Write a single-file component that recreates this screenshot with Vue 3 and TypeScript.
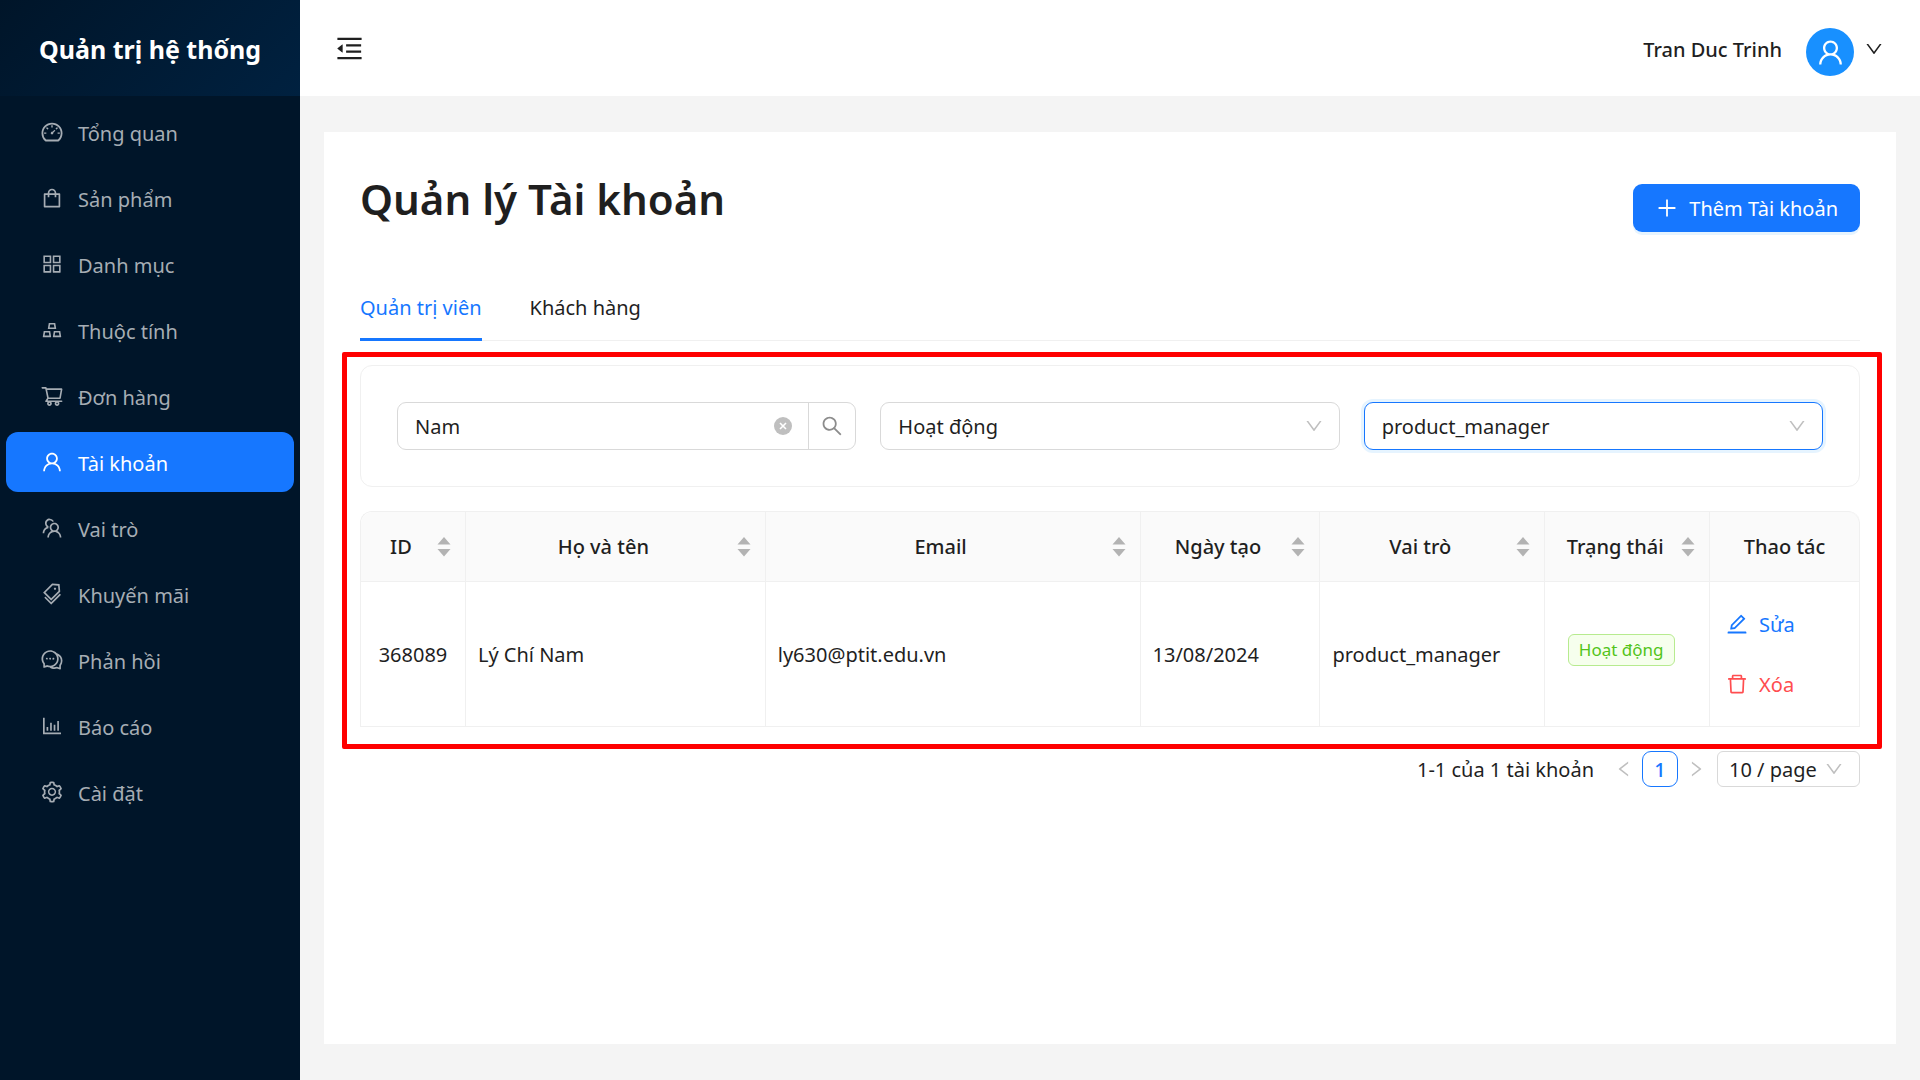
<script setup lang="ts">
import { ref } from 'vue'

interface MenuItem {
  label: string
  icon: string
}

interface Account {
  id: number
  name: string
  email: string
  createdAt: string
  role: string
  status: string
}

interface Column {
  title: string
  width?: string
  sortable: boolean
}

const userIcon =
  'M858.5 763.6a374 374 0 00-80.6-119.5 375.63 375.63 0 00-119.5-80.6c-.4-.2-.8-.3-1.2-.5C719.5 518 760 444.7 760 362c0-137-111-248-248-248S264 225 264 362c0 82.7 40.5 156 102.8 201.1-.4.2-.8.3-1.2.5-44.8 18.9-85 46-119.5 80.6a375.63 375.63 0 00-80.6 119.5A371.7 371.7 0 00136 901.8a8 8 0 008 8.2h60c4.4 0 7.9-3.5 8-7.8 2-77.2 33-149.5 87.8-204.3 56.7-56.7 132-87.9 212.2-87.9s155.5 31.2 212.2 87.9C779 752.7 810 825 812 902.2c.1 4.4 3.6 7.8 8 7.8h60a8 8 0 008-8.2c-1-47.8-10.9-94.3-29.5-138.2zM512 534c-45.9 0-89.1-17.9-121.6-50.4S340 407.9 340 362c0-45.9 17.9-89.1 50.4-121.6S466.1 190 512 190s89.1 17.9 121.6 50.4S684 316.1 684 362c0 45.9-17.9 89.1-50.4 121.6S557.9 534 512 534z'
const downIcon =
  'M884 256h-75c-5.1 0-9.9 2.5-12.9 6.6L512 654.2 227.9 262.6c-3-4.1-7.8-6.6-12.9-6.6h-75c-6.5 0-10.3 7.4-6.5 12.7l352.6 486.1c12.8 17.6 39 17.6 51.7 0l352.6-486.1c3.9-5.3.1-12.7-6.4-12.7z'
const foldIcon =
  'M408 442h480c4.4 0 8-3.6 8-8v-56c0-4.4-3.6-8-8-8H408c-4.4 0-8 3.6-8 8v56c0 4.4 3.6 8 8 8zm-8 204c0 4.4 3.6 8 8 8h480c4.4 0 8-3.6 8-8v-56c0-4.4-3.6-8-8-8H408c-4.4 0-8 3.6-8 8v56zm504-486H120c-4.4 0-8 3.6-8 8v56c0 4.4 3.6 8 8 8h784c4.4 0 8-3.6 8-8v-56c0-4.4-3.6-8-8-8zm0 632H120c-4.4 0-8 3.6-8 8v56c0 4.4 3.6 8 8 8h784c4.4 0 8-3.6 8-8v-56c0-4.4-3.6-8-8-8zM115.4 518.9L271.7 642c5.8 4.6 14.4.5 14.4-6.9V388.9c0-7.4-8.5-11.5-14.4-6.9L115.4 505.1a8.74 8.74 0 000 13.8z'
const plusIcon =
  'M482 152h60q8 0 8 8v704q0 8-8 8h-60q-8 0-8-8V160q0-8 8-8zM160 474h704q8 0 8 8v60q0 8-8 8H160q-8 0-8-8v-60q0-8 8-8z'
const searchIcon =
  'M909.6 854.5L649.9 594.8C690.2 542.7 712 479 712 412c0-80.2-31.3-155.4-87.9-212.1-56.6-56.7-132-87.9-212.1-87.9s-155.5 31.3-212.1 87.9C143.2 256.5 112 331.8 112 412c0 80.1 31.3 155.5 87.9 212.1C256.5 680.8 331.8 712 412 712c67 0 130.6-21.8 182.7-62l259.7 259.6a8.2 8.2 0 0011.6 0l43.6-43.5a8.2 8.2 0 000-11.6zM570.4 570.4C528 612.7 471.8 636 412 636s-116-23.3-158.4-65.6C211.3 528 188 471.8 188 412s23.3-116.1 65.6-158.4C296 211.3 352.2 188 412 188s116.1 23.2 158.4 65.6S636 352.2 636 412s-23.3 116.1-65.6 158.4z'
const editIcon =
  'M257.7 752c2 0 4-.2 6-.5L431.9 722c2-.4 3.9-1.3 5.3-2.8l423.9-423.9a9.96 9.96 0 000-14.1L694.9 114.9c-1.9-1.9-4.4-2.9-7.1-2.9s-5.2 1-7.1 2.9L256.8 538.8c-1.5 1.5-2.4 3.3-2.8 5.3l-29.5 168.2a33.5 33.5 0 009.4 29.8c6.6 6.4 14.9 9.9 23.8 9.9zm67.4-174.4L687.8 215l73.3 73.3-362.7 362.6-88.9 15.7 15.6-89zM880 836H144c-17.7 0-32 14.3-32 32v36c0 4.4 3.6 8 8 8h784c4.4 0 8-3.6 8-8v-36c0-17.7-14.3-32-32-32z'
const deleteIcon =
  'M360 184h-8c4.4 0 8-3.6 8-8v8h304v-8c0 4.4 3.6 8 8 8h-8v72h72v-80c0-35.3-28.7-64-64-64H352c-35.3 0-64 28.7-64 64v80h72v-72zm504 72H160c-17.7 0-32 14.3-32 32v32c0 4.4 3.6 8 8 8h60.4l24.7 523c1.6 34.1 29.8 61 63.9 61h454c34.2 0 62.3-26.8 63.9-61l24.7-523H888c4.4 0 8-3.6 8-8v-32c0-17.7-14.3-32-32-32zM731.3 840H292.7l-24.2-512h487l-24.2 512z'
const leftIcon =
  'M724 218.3V141c0-6.7-7.7-10.4-12.9-6.3L260.3 486.8a31.86 31.86 0 000 50.3l450.8 352.1c5.3 4.1 12.9.4 12.9-6.3v-77.3c0-4.9-2.3-9.6-6.1-12.6l-360-281 360-281.1c3.8-3 6.1-7.7 6.1-12.6z'
const rightIcon =
  'M765.7 486.8L314.9 134.7A7.97 7.97 0 00302 141v77.3c0 4.9 2.3 9.6 6.1 12.6l360 281.1-360 281.1c-3.9 3-6.1 7.7-6.1 12.6V883c0 6.7 7.7 10.4 12.9 6.3l450.8-352.1a31.96 31.96 0 000-50.4z'

const menu: MenuItem[] = [
  {
    label: 'Tổng quan',
    icon: 'M924.8 385.6a446.7 446.7 0 00-96-142.4 446.7 446.7 0 00-142.4-96C631.1 123.8 572.5 112 512 112s-119.1 11.8-174.4 35.2a446.7 446.7 0 00-142.4 96 446.7 446.7 0 00-96 142.4C75.8 440.9 64 499.5 64 560c0 132.7 58.3 257.7 159.9 343.1l1.7 1.4c5.8 4.8 13.1 7.5 20.6 7.5h531.7c7.5 0 14.8-2.7 20.6-7.5l1.7-1.4C901.7 817.7 960 692.7 960 560c0-60.5-11.9-119.1-35.2-174.4zM761.4 836H262.6A371.12 371.12 0 01140 560c0-99.4 38.7-192.8 109-263 70.3-70.3 163.7-109 263-109 99.4 0 192.8 38.7 263 109 70.3 70.3 109 163.7 109 263 0 105.6-44.5 205.5-122.6 276zM623.5 421.5a8.03 8.03 0 00-11.3 0L527.7 506c-18.7-5-39.4-.2-54.1 14.5a55.95 55.95 0 000 79.2 55.95 55.95 0 0079.2 0 55.87 55.87 0 0014.5-54.1l84.5-84.5c3.1-3.1 3.1-8.2 0-11.3l-28.3-28.3zM490 320h44c4.4 0 8-3.6 8-8v-80c0-4.4-3.6-8-8-8h-44c-4.4 0-8 3.6-8 8v80c0 4.4 3.6 8 8 8zm260 218v44c0 4.4 3.6 8 8 8h80c4.4 0 8-3.6 8-8v-44c0-4.4-3.6-8-8-8h-80c-4.4 0-8 3.6-8 8zm12.7-197.2l-31.1-31.1a8.03 8.03 0 00-11.3 0l-56.6 56.6a8.03 8.03 0 000 11.3l31.1 31.1c3.1 3.1 8.2 3.1 11.3 0l56.6-56.6c3.1-3.1 3.1-8.2 0-11.3zm-458.6-31.1a8.03 8.03 0 00-11.3 0l-31.1 31.1a8.03 8.03 0 000 11.3l56.6 56.6c3.1 3.1 8.2 3.1 11.3 0l31.1-31.1c3.1-3.1 3.1-8.2 0-11.3l-56.6-56.6zM262 530h-80c-4.4 0-8 3.6-8 8v44c0 4.4 3.6 8 8 8h80c4.4 0 8-3.6 8-8v-44c0-4.4-3.6-8-8-8z',
  },
  {
    label: 'Sản phẩm',
    icon: 'M832 312H696v-16c0-101.6-82.4-184-184-184s-184 82.4-184 184v16H192c-17.7 0-32 14.3-32 32v536c0 17.7 14.3 32 32 32h640c17.7 0 32-14.3 32-32V344c0-17.7-14.3-32-32-32zm-432-16c0-61.9 50.1-112 112-112s112 50.1 112 112v16H400v-16zm392 544H232V384h96v88c0 4.4 3.6 8 8 8h56c4.4 0 8-3.6 8-8v-88h224v88c0 4.4 3.6 8 8 8h56c4.4 0 8-3.6 8-8v-88h96v456z',
  },
  {
    label: 'Danh mục',
    icon: 'M464 144H160c-8.8 0-16 7.2-16 16v304c0 8.8 7.2 16 16 16h304c8.8 0 16-7.2 16-16V160c0-8.8-7.2-16-16-16zm-52 268H212V212h200v200zm452-268H560c-8.8 0-16 7.2-16 16v304c0 8.8 7.2 16 16 16h304c8.8 0 16-7.2 16-16V160c0-8.8-7.2-16-16-16zm-52 268H612V212h200v200zM464 544H160c-8.8 0-16 7.2-16 16v304c0 8.8 7.2 16 16 16h304c8.8 0 16-7.2 16-16V560c0-8.8-7.2-16-16-16zm-52 268H212V612h200v200zm452-268H560c-8.8 0-16 7.2-16 16v304c0 8.8 7.2 16 16 16h304c8.8 0 16-7.2 16-16V560c0-8.8-7.2-16-16-16zm-52 268H612V612h200v200z',
  },
  {
    label: 'Thuộc tính',
    icon: 'M342 472h342c.4 0 .9 0 1.3-.1 4.4-.7 7.3-4.8 6.6-9.2l-40.2-248c-.6-3.9-4-6.7-7.9-6.7H382.2c-3.9 0-7.3 2.8-7.9 6.7l-40.2 248c-.1.4-.1.9-.1 1.3 0 4.4 3.6 8 8 8zm91.2-196h159.5l20.7 128h-201l20.8-128zm2.5 282.7c-.6-3.9-4-6.7-7.9-6.7H166.2c-3.9 0-7.3 2.8-7.9 6.7l-40.2 248c-.1.4-.1.9-.1 1.3 0 4.4 3.6 8 8 8h342c.4 0 .9 0 1.3-.1 4.4-.7 7.3-4.8 6.6-9.2l-40.2-248zM196.5 748l20.7-128h159.5l20.7 128H196.5zm709.4 58.7l-40.2-248c-.6-3.9-4-6.7-7.9-6.7H596.2c-3.9 0-7.3 2.8-7.9 6.7l-40.2 248c-.1.4-.1.9-.1 1.3 0 4.4 3.6 8 8 8h342c.4 0 .9 0 1.3-.1 4.3-.7 7.3-4.8 6.6-9.2zM626.5 748l20.7-128h159.5l20.7 128H626.5z',
  },
  {
    label: 'Đơn hàng',
    icon: 'M922.9 701.9H327.4l29.9-60.9 496.8-.9c16.8 0 31.2-12 34.2-28.6l68.8-385.1c1.8-10.1-.9-20.5-7.5-28.4a34.99 34.99 0 00-26.6-12.5l-632-2.1-5.4-25.4c-3.4-16.2-18-28-34.6-28H96.5a35.3 35.3 0 100 70.6h125.9L246 312.8l58.1 281.3-74.8 122.1a34.96 34.96 0 00-3 36.8c6 11.9 18.1 19.4 31.5 19.4h62.8a102.43 102.43 0 00-20.6 61.7c0 56.6 46 102.6 102.6 102.6s102.6-46 102.6-102.6c0-22.3-7.4-44-20.6-61.7h161.1a102.43 102.43 0 00-20.6 61.7c0 56.6 46 102.6 102.6 102.6s102.6-46 102.6-102.6c0-22.3-7.4-44-20.6-61.7H923c19.4 0 35.3-15.8 35.3-35.3a35.42 35.42 0 00-35.4-35.2zM305.7 253l575.8 1.9-56.4 315.8-452.3.8L305.7 253zm96.9 612.7c-17.4 0-31.6-14.2-31.6-31.6 0-17.4 14.2-31.6 31.6-31.6s31.6 14.2 31.6 31.6a31.6 31.6 0 01-31.6 31.6zm325.1 0c-17.4 0-31.6-14.2-31.6-31.6 0-17.4 14.2-31.6 31.6-31.6s31.6 14.2 31.6 31.6a31.6 31.6 0 01-31.6 31.6z',
  },
  { label: 'Tài khoản', icon: userIcon },
  {
    label: 'Vai trò',
    icon: 'M824.2 699.9a301.55 301.55 0 00-86.4-60.4C783.1 602.8 812 546.8 812 484c0-110.8-92.4-201.7-203.2-200-109.1 1.7-197 90.6-197 200 0 62.8 29 118.8 74.2 155.5a300.95 300.95 0 00-86.4 60.4C345 754.6 314 826.8 312 903.8a8 8 0 008 8.2h56c4.3 0 7.9-3.4 8-7.7 1.9-58 25.4-112.3 66.7-153.5A226.62 226.62 0 01612 684c60.9 0 118.2 23.7 161.3 66.8C814.6 792 838 846.3 840 904.3c.1 4.3 3.7 7.7 8 7.7h56a8 8 0 008-8.2c-2-77-33-149.2-87.8-203.9zM612 612c-34.2 0-66.4-13.3-90.5-37.5a126.86 126.86 0 01-37.5-91.8c.3-32.8 13.4-64.5 36.3-88 24-24.6 56.1-38.3 90.4-38.7 33.9-.3 66.8 12.9 91 36.6 24.8 24.3 38.4 56.8 38.4 91.4 0 34.2-13.3 66.3-37.5 90.5A127.3 127.3 0 01612 612zM361.5 510.4c-.9-8.7-1.4-17.5-1.4-26.4 0-15.9 1.5-31.4 4.3-46.5.7-3.6-1.2-7.3-4.5-8.8-13.6-6.1-26.1-14.5-36.9-25.1a127.54 127.54 0 01-38.7-95.4c.9-32.1 13.8-62.6 36.3-85.6 24.7-25.3 57.9-39.1 93.2-38.7 31.9.3 62.7 12.6 86 34.4 7.9 7.4 14.7 15.6 20.4 24.4 2 3.1 5.9 4.4 9.3 3.2 17.6-6.1 36.2-10.4 55.3-12.4 5.6-.6 8.8-6.6 6.3-11.6-32.5-64.3-98.9-108.7-175.7-109.9-110.9-1.7-203.3 89.2-203.3 199.9 0 62.8 28.9 118.8 74.2 155.5-31.8 14.7-61.1 35-86.5 60.4-54.8 54.7-85.8 126.9-87.8 204a8 8 0 008 8.2h56.1c4.3 0 7.9-3.4 8-7.7 1.9-58 25.4-112.3 66.7-153.5 29.4-29.4 65.4-49.8 104.7-59.7 3.9-1 6.5-4.7 6-8.7z',
  },
  {
    label: 'Khuyến mãi',
    icon: 'M483.2 790.3L861.4 412c1.7-1.7 2.5-4 2.3-6.3l-25.5-301.4c-.7-7.8-6.8-13.9-14.6-14.6L522.2 64.3c-2.3-.2-4.7.6-6.3 2.3L137.7 444.8a8.03 8.03 0 000 11.3l334.2 334.2c3.1 3.2 8.2 3.2 11.3 0zm62.6-651.7l224.6 19 19 224.6L477.5 694 233.9 450.5l311.9-311.9zm60.16 186.23a48 48 0 1067.88-67.89 48 48 0 10-67.88 67.89zM889.7 539.8l-39.6-39.5a8.03 8.03 0 00-11.3 0l-362 361.3-237.6-237a8.03 8.03 0 00-11.3 0l-39.6 39.5a8.03 8.03 0 000 11.3l243.2 242.8 39.6 39.5c3.1 3.1 8.2 3.1 11.3 0l407.3-406.6c3.1-3.1 3.1-8.2 0-11.3z',
  },
  {
    label: 'Phản hồi',
    icon: 'M573 421c-23.1 0-41 17.9-41 40s17.9 40 41 40c21.1 0 39-17.9 39-40s-17.9-40-39-40zm-280 0c-23.1 0-41 17.9-41 40s17.9 40 41 40c21.1 0 39-17.9 39-40s-17.9-40-39-40zM894 345a343.92 343.92 0 00-189-130v.1c-17.1-19-36.4-36.5-58-52.1-163.7-119-393.5-82.7-513 81-96.3 133-92.2 311.9 6 439l.8 132.6c0 3.2.5 6.4 1.5 9.4a31.95 31.95 0 0040.1 20.9L309 806c33.5 11.9 68.1 18.7 102.5 20.6l-.5.4c89.1 64.9 205.9 84.4 313 49l127.1 41.4c3.2 1 6.5 1.6 9.9 1.6 17.7 0 32-14.3 32-32V753c88.1-119.6 90.4-284.9 1-408zM323 735l-12-5-99 31-1-104-8-9c-84.6-103.2-90.2-251.9-11-361 96.4-132.2 281.2-161.4 413-66 132.2 96.1 161.5 280.6 66 412-80.1 109.9-223.5 150.5-348 102zm505-17l-8 10 1 104-98-33-12 5c-56 20.8-115.7 22.5-171 7l-.2-.1A367.31 367.31 0 00729 676c76.4-105.3 88.8-237.6 44.4-350.4l.6.4c23 16.5 44.1 37.1 62 62 72.6 99.6 68.5 235.2-8 330zM433 421c-23.1 0-41 17.9-41 40s17.9 40 41 40c21.1 0 39-17.9 39-40s-17.9-40-39-40z',
  },
  {
    label: 'Báo cáo',
    icon: 'M888 792H200V168c0-4.4-3.6-8-8-8h-56c-4.4 0-8 3.6-8 8v688c0 4.4 3.6 8 8 8h752c4.4 0 8-3.6 8-8v-56c0-4.4-3.6-8-8-8zm-600-80h56c4.4 0 8-3.6 8-8V560c0-4.4-3.6-8-8-8h-56c-4.4 0-8 3.6-8 8v144c0 4.4 3.6 8 8 8zm152 0h56c4.4 0 8-3.6 8-8V384c0-4.4-3.6-8-8-8h-56c-4.4 0-8 3.6-8 8v320c0 4.4 3.6 8 8 8zm152 0h56c4.4 0 8-3.6 8-8V462c0-4.4-3.6-8-8-8h-56c-4.4 0-8 3.6-8 8v242c0 4.4 3.6 8 8 8zm152 0h56c4.4 0 8-3.6 8-8V304c0-4.4-3.6-8-8-8h-56c-4.4 0-8 3.6-8 8v400c0 4.4 3.6 8 8 8z',
  },
  {
    label: 'Cài đặt',
    icon: 'M924.8 625.7l-65.5-56c3.1-19 4.7-38.4 4.7-57.8s-1.6-38.8-4.7-57.8l65.5-56a32.03 32.03 0 009.3-35.2l-.9-2.6a443.74 443.74 0 00-79.7-137.9l-1.8-2.1a32.12 32.12 0 00-35.1-9.5l-81.3 28.9c-30-24.6-63.5-44-99.7-57.6l-15.7-85a32.05 32.05 0 00-25.8-25.7l-2.7-.5c-52.1-9.4-106.9-9.4-159 0l-2.7.5a32.05 32.05 0 00-25.8 25.7l-15.8 85.4a351.86 351.86 0 00-99 57.4l-81.9-29.1a32 32 0 00-35.1 9.5l-1.8 2.1a446.02 446.02 0 00-79.7 137.9l-.9 2.6c-4.5 12.5-.8 26.5 9.3 35.2l66.3 56.6c-3.1 18.8-4.6 38-4.6 57.1 0 19.2 1.5 38.4 4.6 57.1L99 625.5a32.03 32.03 0 00-9.3 35.2l.9 2.6c18.1 50.4 44.9 96.9 79.7 137.9l1.8 2.1a32.12 32.12 0 0035.1 9.5l81.9-29.1c29.8 24.5 63.1 43.9 99 57.4l15.8 85.4a32.05 32.05 0 0025.8 25.7l2.7.5a449.4 449.4 0 00159 0l2.7-.5a32.05 32.05 0 0025.8-25.7l15.7-85a350 350 0 0099.7-57.6l81.3 28.9a32 32 0 0035.1-9.5l1.8-2.1c34.8-41.1 61.6-87.5 79.7-137.9l.9-2.6c4.5-12.3.8-26.3-9.3-35zM788.3 465.9c2.5 15.1 3.8 30.6 3.8 46.1s-1.3 31-3.8 46.1l-6.6 40.1 74.7 63.9a370.03 370.03 0 01-42.6 73.6L721 702.8l-31.4 25.8c-23.9 19.6-50.5 35-79.3 45.8l-38.1 14.3-17.9 97a377.5 377.5 0 01-85 0l-17.9-97.2-37.8-14.5c-28.5-10.8-55-26.2-78.7-45.7l-31.4-25.9-93.4 33.2c-17-22.9-31.2-47.6-42.6-73.6l75.5-64.5-6.5-40c-2.4-14.9-3.7-30.3-3.7-45.5 0-15.3 1.2-30.6 3.7-45.5l6.5-40-75.5-64.5c11.3-26.1 25.6-50.7 42.6-73.6l93.4 33.2 31.4-25.9c23.7-19.5 50.2-34.9 78.7-45.7l37.9-14.3 17.9-97.2c28.1-3.2 56.8-3.2 85 0l17.9 97 38.1 14.3c28.7 10.8 55.4 26.2 79.3 45.8l31.4 25.8 92.8-32.9c17 22.9 31.2 47.6 42.6 73.6L781.8 426l6.5 39.9zM512 326c-97.2 0-176 78.8-176 176s78.8 176 176 176 176-78.8 176-176-78.8-176-176-176zm79.2 255.2A111.6 111.6 0 01512 614c-29.9 0-58-11.7-79.2-32.8A111.6 111.6 0 01400 502c0-29.9 11.7-58 32.8-79.2C454 401.6 482.1 390 512 390c29.9 0 58 11.6 79.2 32.8A111.6 111.6 0 01624 502c0 29.9-11.7 58-32.8 79.2z',
  },
]

const tabs = ['Quản trị viên', 'Khách hàng']

const columns: Column[] = [
  { title: 'ID', width: '7%', sortable: true },
  { title: 'Họ và tên', width: '20%', sortable: true },
  { title: 'Email', sortable: true },
  { title: 'Ngày tạo', width: '12%', sortable: true },
  { title: 'Vai trò', width: '15%', sortable: true },
  { title: 'Trạng thái', width: '11%', sortable: true },
  { title: 'Thao tác', width: '10%', sortable: false },
]

const accounts: Account[] = [
  {
    id: 368089,
    name: 'Lý Chí Nam',
    email: 'ly630@ptit.edu.vn',
    createdAt: '13/08/2024',
    role: 'product_manager',
    status: 'Hoạt động',
  },
]

const activeMenu = ref('Tài khoản')
const activeTab = ref('Quản trị viên')
const keyword = ref('Nam')
const status = ref('Hoạt động')
const role = ref('product_manager')
const pageSize = ref('10 / page')
</script>

<template>
  <div class="layout">
    <aside class="sidebar">
      <div class="brand">Quản trị hệ thống</div>
      <nav class="menu">
        <a
          v-for="item in menu"
          :key="item.label"
          href="#"
          class="menu-item"
          :class="{ active: item.label === activeMenu }"
          @click.prevent="activeMenu = item.label"
        >
          <svg class="icon" viewBox="0 0 1024 1024" aria-hidden="true"><path :d="item.icon" /></svg>
          <span>{{ item.label }}</span>
        </a>
      </nav>
    </aside>

    <div class="main">
      <header class="topbar">
        <button type="button" class="plain fold" aria-label="Thu gọn menu">
          <svg class="icon-lg" viewBox="0 0 1024 1024" aria-hidden="true"><path :d="foldIcon" /></svg>
        </button>
        <button type="button" class="plain user">
          <span class="user-name">Tran Duc Trinh</span>
          <span class="avatar">
            <svg class="icon-lg" viewBox="0 0 1024 1024" aria-hidden="true"><path :d="userIcon" /></svg>
          </span>
          <svg class="user-arrow" viewBox="0 0 1024 1024" aria-hidden="true"><path :d="downIcon" /></svg>
        </button>
      </header>

      <main class="card">
        <div class="page-head">
          <h1>Quản lý Tài khoản</h1>
          <button type="button" class="add">
            <svg class="icon" viewBox="0 0 1024 1024" aria-hidden="true"><path :d="plusIcon" /></svg>
            <span>Thêm Tài khoản</span>
          </button>
        </div>

        <div class="tabs" role="tablist">
          <button
            v-for="tab in tabs"
            :key="tab"
            type="button"
            role="tab"
            class="tab"
            :class="{ active: tab === activeTab }"
            :aria-selected="tab === activeTab"
            @click="activeTab = tab"
          >
            {{ tab }}
          </button>
        </div>

        <section class="results">
          <form class="filters" @submit.prevent>
            <div class="search">
              <input v-model="keyword" type="text" aria-label="Tìm kiếm" />
              <button type="button" class="plain clear" aria-label="Xóa tìm kiếm" @click="keyword = ''">
                <svg viewBox="0 0 18 18" aria-hidden="true">
                  <circle cx="9" cy="9" r="9" fill="#bfbfbf" />
                  <path d="M6 6l6 6M12 6l-6 6" stroke="#fff" stroke-width="1.6" />
                </svg>
              </button>
              <button type="submit" class="plain search-button" aria-label="Tìm">
                <svg class="icon" viewBox="0 0 1024 1024" aria-hidden="true"><path :d="searchIcon" /></svg>
              </button>
            </div>
            <div class="select">
              <select v-model="status" aria-label="Trạng thái">
                <option>Hoạt động</option>
              </select>
              <svg viewBox="0 0 1024 1024" aria-hidden="true"><path :d="downIcon" /></svg>
            </div>
            <div class="select focused">
              <select v-model="role" aria-label="Vai trò">
                <option>product_manager</option>
              </select>
              <svg viewBox="0 0 1024 1024" aria-hidden="true"><path :d="downIcon" /></svg>
            </div>
          </form>

          <table>
            <colgroup>
              <col v-for="col in columns" :key="col.title" :style="{ width: col.width }" />
            </colgroup>
            <thead>
              <tr>
                <th v-for="col in columns" :key="col.title" scope="col">
                  <div class="th">
                    <span class="th-title">{{ col.title }}</span>
                    <svg v-if="col.sortable" class="sorter" viewBox="0 0 14 20" aria-hidden="true">
                      <path d="M7 0L13.5 7.5H0.5zM7 19.5L13.5 12H0.5z" />
                    </svg>
                  </div>
                </th>
              </tr>
            </thead>
            <tbody>
              <tr v-for="row in accounts" :key="row.id">
                <td class="center">{{ row.id }}</td>
                <td>{{ row.name }}</td>
                <td>{{ row.email }}</td>
                <td>{{ row.createdAt }}</td>
                <td>{{ row.role }}</td>
                <td class="center"><span class="tag">{{ row.status }}</span></td>
                <td>
                  <div class="actions">
                    <button type="button" class="plain action">
                      <svg class="icon" viewBox="0 0 1024 1024" aria-hidden="true"><path :d="editIcon" /></svg>
                      <span>Sửa</span>
                    </button>
                    <button type="button" class="plain action danger">
                      <svg class="icon" viewBox="0 0 1024 1024" aria-hidden="true"><path :d="deleteIcon" /></svg>
                      <span>Xóa</span>
                    </button>
                  </div>
                </td>
              </tr>
            </tbody>
          </table>
          <div class="highlight" aria-hidden="true"></div>
        </section>

        <div class="pagination">
          <span class="total">1-1 của 1 tài khoản</span>
          <button type="button" class="plain arrow" aria-label="Trang trước" disabled>
            <svg viewBox="0 0 1024 1024" aria-hidden="true"><path :d="leftIcon" /></svg>
          </button>
          <button type="button" class="page">1</button>
          <button type="button" class="plain arrow" aria-label="Trang sau" disabled>
            <svg viewBox="0 0 1024 1024" aria-hidden="true"><path :d="rightIcon" /></svg>
          </button>
          <div class="select size">
            <select v-model="pageSize" aria-label="Số dòng mỗi trang">
              <option>10 / page</option>
            </select>
            <svg viewBox="0 0 1024 1024" aria-hidden="true"><path :d="downIcon" /></svg>
          </div>
        </div>
      </main>
    </div>
  </div>
</template>

<style>
body {
  margin: 0;
  background: #f4f4f4;
}
</style>

<style scoped>
.layout {
  display: flex;
  min-height: 100vh;
  font-family: 'Noto Sans', 'Open Sans', sans-serif;
  font-size: 20px;
  line-height: 33px;
  color: #1f1f1f;
}

.layout * {
  box-sizing: border-box;
}

button,
input,
select {
  font: inherit;
  color: inherit;
}

svg {
  display: block;
  flex: none;
  fill: currentColor;
}

.plain {
  padding: 0;
  border: 0;
  background: none;
}

.icon {
  width: 24px;
  height: 24px;
}

.icon-lg {
  width: 31px;
  height: 31px;
}

/* Sidebar */
.sidebar {
  flex: none;
  width: 300px;
  background: #001529;
}

.brand {
  display: flex;
  align-items: center;
  justify-content: center;
  height: 96px;
  padding-top: 3px;
  font-size: 25px;
  font-weight: 700;
  color: #fff;
  background: linear-gradient(135deg, #001529 0%, #002140 100%);
}

.menu {
  display: flex;
  flex-direction: column;
  gap: 6px;
  padding: 6px;
}

.menu-item {
  display: flex;
  align-items: center;
  gap: 14px;
  height: 60px;
  padding: 0 34px;
  border-radius: 12px;
  color: #a6adb4;
  text-decoration: none;
}

.menu-item span {
  padding-top: 2px;
}

.menu-item.active {
  background: #1677ff;
  color: #fff;
}

/* Top bar */
.main {
  display: flex;
  flex: 1;
  flex-direction: column;
  min-width: 0;
}

.topbar {
  display: flex;
  align-items: center;
  justify-content: space-between;
  height: 96px;
  padding: 0 36px 0 34px;
  background: #fff;
}

.user {
  display: flex;
  align-items: center;
  padding-top: 2px;
}

.user-name {
  font-weight: 500;
}

.avatar {
  display: flex;
  align-items: center;
  justify-content: center;
  width: 48px;
  height: 48px;
  margin: 6px 10px 0 24px;
  border-radius: 50%;
  background: #1890ff;
  color: #fff;
}

.user-arrow {
  width: 20px;
  height: 20px;
}

/* Content card */
.card {
  flex: 1;
  margin: 36px 24px;
  padding: 36px;
  background: #fff;
}

.page-head {
  display: flex;
  align-items: flex-end;
  justify-content: space-between;
  height: 64px;
}

h1 {
  align-self: flex-start;
  margin: 0;
  font-size: 42px;
  font-weight: 600;
  line-height: 62px;
}

.add {
  display: flex;
  align-items: center;
  gap: 10px;
  height: 48px;
  padding: 0 22px;
  border: 0;
  border-radius: 9px;
  background: #1677ff;
  color: #fff;
  box-shadow: 0 3px 0 rgba(5, 145, 255, 0.1);
}

.tabs {
  display: flex;
  gap: 48px;
  margin: 40px 0 24px;
  box-shadow: inset 0 -1px #f0f0f0;
}

.tab {
  padding: 19px 0 14px;
  border: 0;
  border-bottom: 3px solid transparent;
  background: none;
}

.tab.active {
  border-bottom-color: #1677ff;
  color: #1677ff;
}

/* Filters */
.results {
  position: relative;
}

.highlight {
  position: absolute;
  inset: -13px -22px -22px -18px;
  border: 5px solid #f00;
  border-radius: 2px;
  pointer-events: none;
}

.filters {
  display: grid;
  grid-template-columns: repeat(3, 1fr);
  gap: 24px;
  margin-bottom: 24px;
  padding: 36px;
  border: 1px solid #f0f0f0;
  border-radius: 12px;
}

.search {
  display: flex;
  align-items: center;
  height: 48px;
  border: 1px solid #d9d9d9;
  border-radius: 9px;
}

.search input {
  flex: 1;
  min-width: 0;
  padding: 0 17px;
  border: 0;
  outline: 0;
  background: none;
}

.clear {
  margin-right: 16px;
}

.clear svg {
  width: 18px;
  height: 18px;
}

.search-button {
  display: flex;
  align-items: center;
  justify-content: center;
  width: 47px;
  height: 46px;
  border-left: 1px solid #d9d9d9;
  color: #8c8c8c;
}

.select {
  position: relative;
  height: 48px;
}

.select select {
  width: 100%;
  height: 100%;
  padding: 0 17px;
  border: 1px solid #d9d9d9;
  border-radius: 9px;
  outline: 0;
  background: #fff;
  appearance: none;
}

.select svg {
  position: absolute;
  top: 50%;
  right: 16px;
  width: 20px;
  height: 20px;
  margin-top: -10px;
  color: #bfbfbf;
  pointer-events: none;
}

.select.focused select {
  border-color: #1677ff;
  box-shadow: 0 0 0 3px rgba(5, 145, 255, 0.1);
}

/* Table */
table {
  width: 100%;
  table-layout: fixed;
  border-collapse: separate;
  border-spacing: 0;
  border-top: 1px solid #f0f0f0;
  border-left: 1px solid #f0f0f0;
  border-radius: 12px 12px 0 0;
}

th,
td {
  padding: 18px 12px;
  border-right: 1px solid #f0f0f0;
  border-bottom: 1px solid #f0f0f0;
  text-align: left;
}

th {
  background: #fafafa;
  font-weight: 500;
}

th:first-child {
  border-top-left-radius: 12px;
}

th:last-child {
  border-top-right-radius: 12px;
}

.th {
  display: flex;
  align-items: center;
}

.th-title {
  flex: 1;
  text-align: center;
  white-space: nowrap;
}

.sorter {
  width: 14px;
  height: 20px;
  margin: 0 2px 0 8px;
  color: #b3b3b3;
}

.center {
  text-align: center;
}

.tag {
  display: inline-block;
  margin: 0 12px 8px 0;
  padding: 0 10px;
  border: 1px solid #b7eb8f;
  border-radius: 6px;
  background: #f6ffed;
  color: #52c41a;
  font-size: 17px;
  line-height: 30px;
  vertical-align: middle;
}

.actions {
  display: flex;
  flex-direction: column;
  gap: 12px;
}

.action {
  display: flex;
  align-items: center;
  gap: 10px;
  height: 48px;
  padding-left: 3px;
  color: #1677ff;
}

.action.danger {
  color: #ff4d4f;
}

/* Pagination */
.pagination {
  display: flex;
  align-items: center;
  justify-content: flex-end;
  height: 36px;
  margin-top: 24px;
}

.total {
  margin-right: 12px;
}

.arrow {
  display: flex;
  align-items: center;
  justify-content: center;
  width: 36px;
  height: 36px;
  color: #bfbfbf;
}

.arrow svg {
  width: 20px;
  height: 20px;
}

.page {
  width: 36px;
  height: 36px;
  padding: 0;
  border: 1px solid #1677ff;
  border-radius: 9px;
  background: #fff;
  color: #1677ff;
  font-weight: 500;
}

.size {
  width: 143px;
  height: 36px;
  margin-left: 3px;
}

.size select {
  padding: 0 11px;
  border-radius: 6px;
}
</style>
